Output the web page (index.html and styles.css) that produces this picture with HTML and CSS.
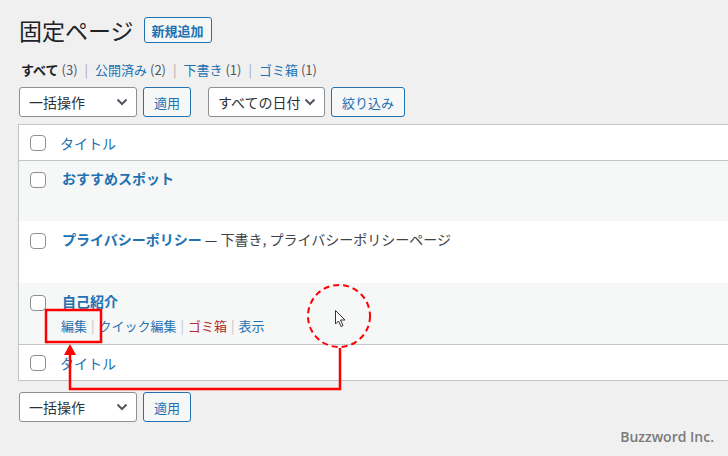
FILE: index.html
```html
<!DOCTYPE html>
<html>
    <head>
        <title>固定ページ</title>
        <link rel="stylesheet" href="styles.css">
    </head>
    <body>
        <div class="wrap">
            <div class="page-head">
                <h1>固定ページ</h1>
                <span class="btn btn-new">新規追加</span>
            </div>
            <ul class="subsubsub">
                <li class="current">すべて <span class="count">(3)</span></li>
                <li class="sep">|</li>
                <li><a>公開済み <span class="count">(2)</span></a></li>
                <li class="sep">|</li>
                <li><a>下書き <span class="count">(1)</span></a></li>
                <li class="sep">|</li>
                <li><a>ゴミ箱 <span class="count">(1)</span></a></li>
            </ul>
            <div class="tablenav">
                <div class="select bulk">一括操作<svg class="chev" width="12" height="8" viewBox="0 0 12 8"><path d="M1.5 1.5 L6 6 L10.5 1.5" /></svg></div>
                <span class="btn">適用</span>
                <div class="select date">すべての日付<svg class="chev" width="12" height="8" viewBox="0 0 12 8"><path d="M1.5 1.5 L6 6 L10.5 1.5" /></svg></div>
                <span class="btn">絞り込み</span>
            </div>
            <div class="list-table">
                <div class="row head">
                    <span class="cb"></span>
                    <a class="col-title">タイトル</a>
                </div>
                <div class="row alt r1">
                    <span class="cb"></span>
                    <div class="cell">
                        <a class="row-title">おすすめスポット</a>
                    </div>
                </div>
                <div class="row r2">
                    <span class="cb"></span>
                    <div class="cell">
                        <a class="row-title">プライバシーポリシー</a><span class="post-state"> — 下書き, プライバシーポリシーページ</span>
                    </div>
                </div>
                <div class="row alt r3">
                    <span class="cb"></span>
                    <div class="cell">
                        <a class="row-title">自己紹介</a>
                        <div class="row-actions">
                            <a>編集</a><span class="sep">|</span><a>クイック編集</a><span class="sep">|</span><a class="trash">ゴミ箱</a><span class="sep">|</span><a>表示</a>
                        </div>
                    </div>
                </div>
                <div class="row foot">
                    <span class="cb"></span>
                    <a class="col-title">タイトル</a>
                </div>
            </div>
            <div class="tablenav bottom">
                <div class="select bulk">一括操作<svg class="chev" width="12" height="8" viewBox="0 0 12 8"><path d="M1.5 1.5 L6 6 L10.5 1.5" /></svg></div>
                <span class="btn">適用</span>
            </div>
        </div>
        <svg class="marks" width="728" height="456">
            <rect x="46" y="310" width="55" height="32" class="mark" />
            <path d="M70 354 L70 389 L340 389 L340 348" class="mark" />
            <path d="M70 344 L76 355 L64 355 z" fill="#ff0000" />
            <circle cx="339" cy="316" r="31" class="mark dashed" />
            <path d="M335.5 310.5 L335.5 324 L338.5 321 L341 326.5 L343 325.5 L340.5 320 L345 320 z" fill="#ffffff" stroke="#333333" stroke-width="1" />
        </svg>
        <div class="credit">Buzzword Inc.</div>
    </body>
</html>
```

FILE: styles.css
```css
html, body {
    margin: 0;
    background-color: #f0f0f1;
    overflow: hidden;
}
body {
    width: 728px;
    height: 456px;
    position: relative;
    font-family: "Noto Sans CJK JP", sans-serif;
    font-size: 13px;
    color: #3c434a;
}
a {
    color: #2271b1;
}
.wrap {
    padding-left: 18px;
}
.page-head {
    display: flex;
    align-items: center;
    padding-top: 17px;
    padding-left: 1px;
    height: 26px;
}
.page-head h1 {
    margin: 0;
    font-size: 23px;
    font-weight: 400;
    line-height: 26px;
    color: #1d2327;
}
.btn {
    display: inline-flex;
    align-items: center;
    box-sizing: border-box;
    height: 30px;
    padding: 0 10px;
    border: 1px solid #2271b1;
    border-radius: 3px;
    background-color: #f6f7f7;
    color: #2271b1;
    font-size: 13px;
    line-height: 1;
}
.btn-new {
    height: 26px;
    margin-left: 10px;
    padding: 0 7px;
    font-weight: 700;
}
.subsubsub {
    display: flex;
    list-style: none;
    margin: 19px 0 0 0;
    padding: 0 0 0 3px;
    line-height: 16px;
    height: 16px;
    gap: 7px;
}
.subsubsub .current {
    font-weight: 700;
    color: #1d2327;
}
.subsubsub .count {
    font-weight: 400;
    color: #50575e;
}
.subsubsub .sep {
    color: #a7aaad;
}
.tablenav {
    display: flex;
    margin-top: 9px;
    padding-left: 1px;
    height: 30px;
}
.tablenav .btn {
    margin-left: 6px;
}
.select {
    display: flex;
    align-items: center;
    justify-content: space-between;
    box-sizing: border-box;
    height: 30px;
    padding: 0 8px 0 9px;
    border: 1px solid #8c8f94;
    border-radius: 3px;
    background-color: #ffffff;
    color: #2c3338;
    font-size: 14px;
}
.select.bulk {
    width: 118px;
}
.select.date {
    width: 117px;
    margin-left: 17px;
}
.chev path {
    fill: none;
    stroke: #50575e;
    stroke-width: 2;
}
.list-table {
    margin-top: 7px;
    width: 760px;
    border: 1px solid #c3c4c7;
    background-color: #ffffff;
}
.row {
    display: flex;
    align-items: flex-start;
    box-sizing: border-box;
}
.row.alt {
    background-color: #f6f7f7;
}
.cb {
    flex: none;
    box-sizing: border-box;
    width: 16px;
    height: 16px;
    margin-left: 11px;
    border: 1px solid #8c8f94;
    border-radius: 4px;
    background-color: #ffffff;
}
.row.head, .row.foot {
    align-items: center;
    height: 36px;
}
.row.head {
    border-bottom: 1px solid #c3c4c7;
}
.row.foot {
    border-top: 1px solid #c3c4c7;
}
.col-title {
    margin-left: 14px;
    font-size: 14px;
    line-height: 16px;
}
.cell {
    margin-left: 16px;
    margin-top: -2px;
    line-height: 16px;
}
.r1 {
    height: 60px;
    padding-top: 11px;
}
.r2 {
    height: 62px;
    padding-top: 12px;
}
.r3 {
    height: 61px;
    padding-top: 12px;
}
.row-title {
    font-size: 14px;
    font-weight: 700;
}
.post-state {
    font-size: 14px;
    color: #3c434a;
}
.row-actions {
    margin-top: 8px;
    font-size: 13px;
    margin-left: -1px;
}
.row-actions .sep {
    color: #c3c4c7;
    padding: 0 4px;
}
.row-actions .trash {
    color: #b32d2e;
}
.tablenav.bottom {
    margin-top: 11px;
}
.marks {
    position: absolute;
    left: 0;
    top: 0;
}
.mark {
    fill: none;
    stroke: #ff0000;
    stroke-width: 2.5;
}
.mark.dashed {
    stroke-width: 2;
    stroke-dasharray: 6, 4;
}
.credit {
    position: absolute;
    right: 14px;
    bottom: 10px;
    font-family: "Open Sans", sans-serif;
    font-size: 14px;
    font-weight: 600;
    color: #7a7a7a;
}
```
